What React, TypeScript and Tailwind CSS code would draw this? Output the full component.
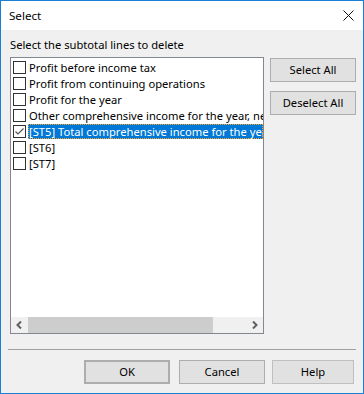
import React from "react";

const items = [
  { label: "Profit before income tax", checked: false },
  { label: "Profit from continuing operations", checked: false },
  { label: "Profit for the year", checked: false },
  { label: "Other comprehensive income for the year, net of tax", checked: false },
  { label: "[ST5] Total comprehensive income for the year", checked: true, selected: true },
  { label: "[ST6]", checked: false },
  { label: "[ST7]", checked: false },
];

const CheckBox = ({ checked }: { checked: boolean }) => (
  <div className="w-[13px] h-[13px] border border-[#333333] bg-white flex items-center justify-center shrink-0">
    {checked && (
      <svg width="11" height="11" viewBox="0 0 11 11">
        <path d="M1.5 5.5 L4 8 L9.5 2.5" fill="none" stroke="#555555" strokeWidth="1.2" />
      </svg>
    )}
  </div>
);

const Button = ({
  children,
  className = "",
}: {
  children: React.ReactNode;
  className?: string;
}) => (
  <div
    className={`flex items-center justify-center border border-[#adadad] bg-[#e1e1e1] text-black ${className}`}
  >
    {children}
  </div>
);

export default function App() {
  return (
    <div
      className="w-[364px] h-[394px] border border-[#1a7fd4] bg-[#f0f0f0] flex flex-col text-[11.2px] text-black overflow-hidden"
      style={{ fontFamily: '"Noto Sans", "Liberation Sans", sans-serif' }}
    >
      {/* title bar */}
      <div className="h-[29px] bg-white flex items-center justify-between pl-[8px] pr-[9px] shrink-0">
        <span className="text-[11.6px] leading-none mt-[1px]">Select</span>
        <svg width="11" height="11" viewBox="0 0 11 11">
          <path d="M0.5 0.5 L10.5 10.5 M10.5 0.5 L0.5 10.5" stroke="#111111" strokeWidth="1" />
        </svg>
      </div>

      <div className="flex flex-col pl-[9px] pt-[7px]">
        <div className="h-[16px] leading-[16px]">Select the subtotal lines to delete</div>

        <div className="flex mt-[4px] gap-[6px]">
          {/* list box */}
          <div className="w-[254px] h-[277px] border border-[#828790] bg-white flex flex-col">
            <div className="flex-1 flex flex-col pt-[1px] overflow-hidden">
              {items.map((it) => (
                <div key={it.label} className="h-[16px] flex items-center pl-[2px]">
                  <CheckBox checked={it.checked} />
                  <div
                    className={`ml-[2px] h-[15px] flex-1 min-w-0 flex items-center whitespace-nowrap overflow-hidden pl-[1px] leading-[15px] ${
                      it.selected
                        ? "bg-[#0078d7] text-white outline-1 outline-dotted outline-[#f5a623] -outline-offset-1"
                        : ""
                    }`}
                  >
                    <span className="whitespace-nowrap">{it.label}</span>
                  </div>
                </div>
              ))}
            </div>
            {/* horizontal scrollbar */}
            <div className="h-[16px] bg-[#f0f0f0] flex items-center">
              <div className="w-[17px] h-full flex items-center justify-center">
                <svg width="7" height="8" viewBox="0 0 7 8">
                  <path d="M5 0.5 L1.5 4 L5 7.5" fill="none" stroke="#606060" strokeWidth="2" />
                </svg>
              </div>
              <div className="w-[185px] h-full bg-[#cdcdcd]" />
              <div className="flex-1" />
              <div className="w-[17px] h-full flex items-center justify-center">
                <svg width="7" height="8" viewBox="0 0 7 8">
                  <path d="M2 0.5 L5.5 4 L2 7.5" fill="none" stroke="#606060" strokeWidth="2" />
                </svg>
              </div>
            </div>
          </div>

          {/* side buttons */}
          <div className="flex flex-col gap-[9px] pt-[1px]">
            <Button className="w-[86px] h-[24px]">Select All</Button>
            <Button className="w-[86px] h-[24px]">Deselect All</Button>
          </div>
        </div>
      </div>

      {/* separator */}
      <div className="mx-[7px] mt-[15px] h-px bg-[#a0a0a0]" />

      {/* bottom buttons */}
      <div className="flex mt-[10px] pl-[83px] gap-[9px]">
        <Button className="w-[86px] h-[24px] border-2 border-[#0078d7]">OK</Button>
        <Button className="w-[86px] h-[24px]">Cancel</Button>
        <Button className="w-[82px] h-[24px] ml-[-2px] bg-[#cccccc] border-[#bfbfbf] text-[#838383]">
          Help
        </Button>
      </div>
    </div>
  );
}
